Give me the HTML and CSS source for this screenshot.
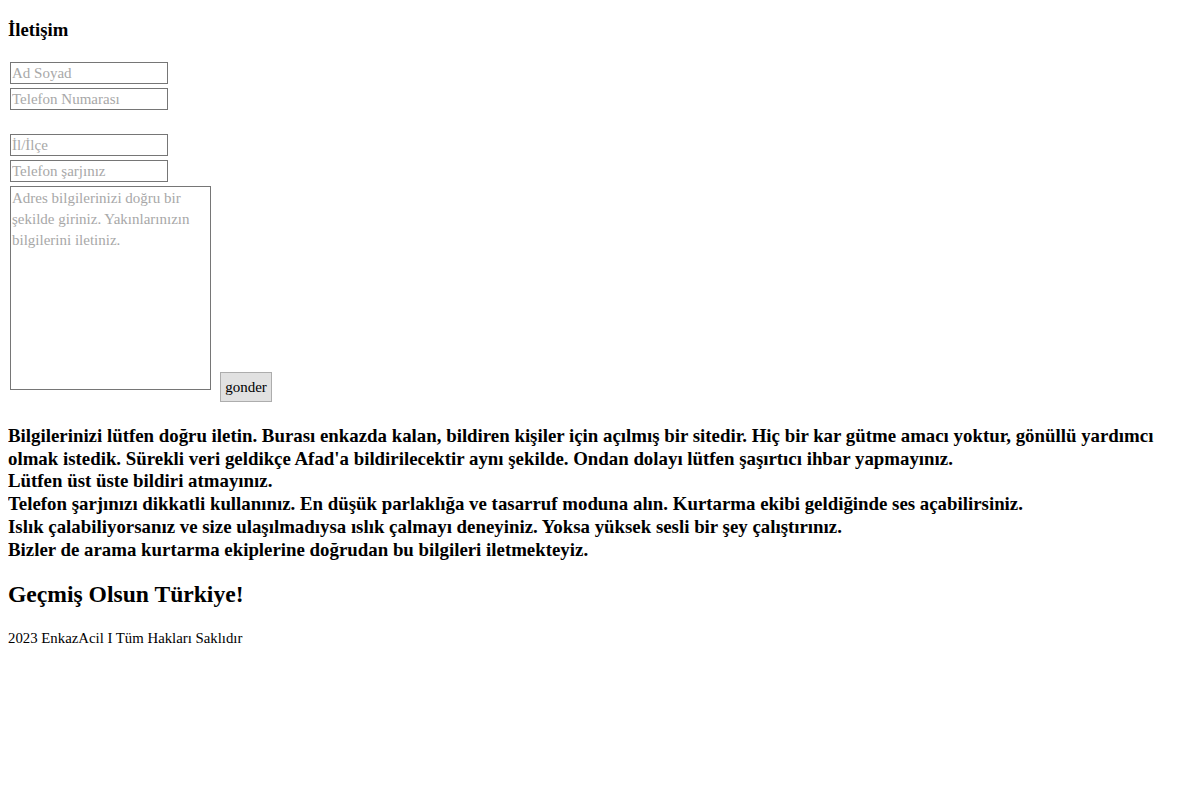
FILE: index.html
```html
<!DOCTYPE html>
<html lang="tr">
<head>
<meta charset="utf-8">
<title>EnkazAcil</title>
<link rel="stylesheet" href="styles.css">
</head>
<body>
<h4 class="title">İletişim</h4>
<form class="form">
  <input class="field" type="text" placeholder="Ad Soyad">
  <input class="field" type="text" placeholder="Telefon Numarası">
  <div class="spacer"></div>
  <input class="field" type="text" placeholder="İl/İlçe">
  <input class="field" type="text" placeholder="Telefon şarjınız">
  <div class="row">
    <textarea class="address" placeholder="Adres bilgilerinizi doğru bir şekilde giriniz. Yakınlarınızın bilgilerini iletiniz."></textarea>
    <button class="send" type="button">gonder</button>
  </div>
</form>
<h3 class="info">Bilgilerinizi lütfen doğru iletin. Burası enkazda kalan, bildiren kişiler için açılmış bir sitedir. Hiç bir kar gütme amacı yoktur, gönüllü yardımcı olmak istedik. Sürekli veri geldikçe Afad'a bildirilecektir aynı şekilde. Ondan dolayı lütfen şaşırtıcı ihbar yapmayınız.<br>Lütfen üst üste bildiri atmayınız.<br>Telefon şarjınızı dikkatli kullanınız. En düşük parlaklığa ve tasarruf moduna alın. Kurtarma ekibi geldiğinde ses açabilirsiniz.<br>Islık çalabiliyorsanız ve size ulaşılmadıysa ıslık çalmayı deneyiniz. Yoksa yüksek sesli bir şey çalıştırınız.<br>Bizler de arama kurtarma ekiplerine doğrudan bu bilgileri iletmekteyiz.</h3>
<h2 class="wish">Geçmiş Olsun Türkiye!</h2>
<p class="footer">2023 EnkazAcil I Tüm Hakları Saklıdır</p>
</body>
</html>
```
FILE: styles.css
```css
html, body {
  background: #ffffff;
  color: #000000;
}
body {
  margin: 8px;
  font-family: "Liberation Serif", "Times New Roman", serif;
  font-size: 16px;
}
.title {
  font-size: 18.7px;
  font-weight: bold;
  margin: 13px 0 21px 0;
  line-height: 18px;
}
.form {
  display: flex;
  flex-direction: column;
  align-items: flex-start;
  margin: 0;
}
.field {
  box-sizing: border-box;
  width: 158px;
  height: 22px;
  margin: 2px;
  padding: 0 1px;
  border: 1px solid #767676;
  font-family: "Liberation Serif", "Times New Roman", serif;
  font-size: 15px;
  color: #000;
  background: #fff;
}
.field::placeholder,
.address::placeholder {
  color: #a8a8a8;
  opacity: 1;
}
.spacer {
  height: 20px;
}
.row {
  display: flex;
  align-items: flex-end;
}
.address {
  box-sizing: border-box;
  width: 201px;
  height: 204px;
  margin: 2px 2px 12px 2px;
  padding: 1px;
  border: 1px solid #767676;
  font-family: "Liberation Serif", "Times New Roman", serif;
  font-size: 15px;
  line-height: 21px;
  resize: none;
}
.send {
  box-sizing: border-box;
  height: 30px;
  width: 52px;
  margin-left: 7px;
  padding: 0 4px;
  background: #e1e1e1;
  border: 1px solid #adadad;
  font-family: "Liberation Serif", "Times New Roman", serif;
  font-size: 15px;
  color: #000;
}
.info {
  font-size: 18.85px;
  line-height: 22.7px;
  font-weight: bold;
  margin: 23px 0 18px 0;
}
.wish {
  font-size: 23.6px;
  font-weight: bold;
  margin: 20px 0 22px 0;
  line-height: 27px;
}
.footer {
  font-size: 14.8px;
  margin: 0;
}
```
